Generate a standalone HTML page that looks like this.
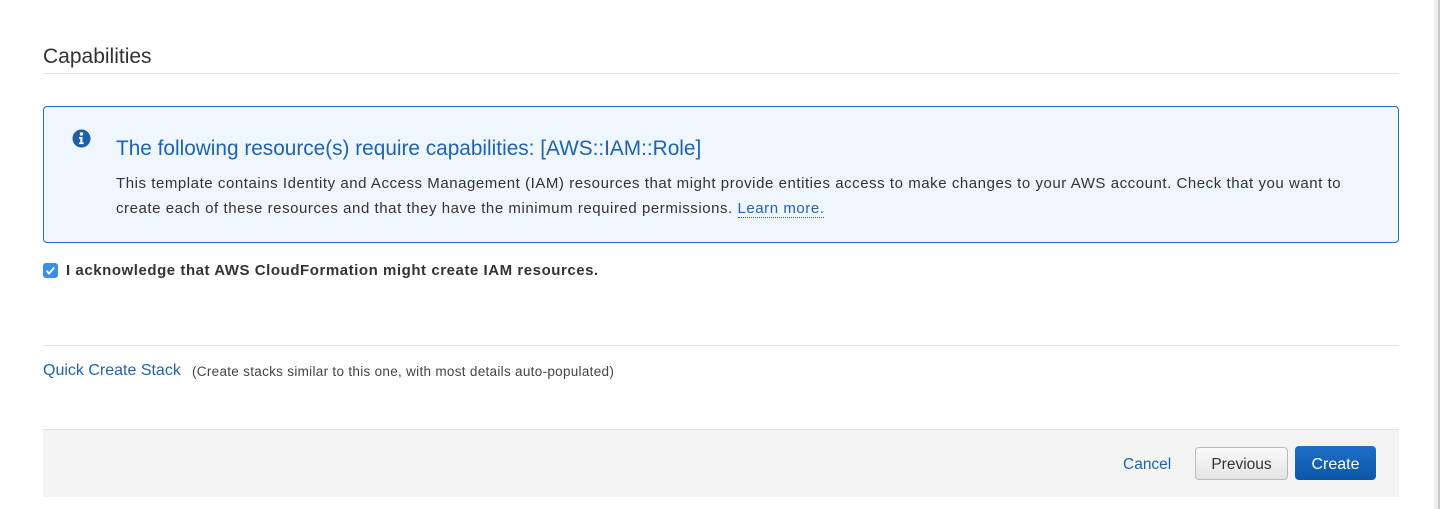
<!DOCTYPE html>
<html><head><style>
body{margin:0;width:1440px;height:509px;background:#fff;font-family:"Liberation Sans",sans-serif;position:relative;overflow:hidden;color:#333}
.a{position:absolute;white-space:nowrap}
</style></head><body>
<div class="a" style="left:1434px;top:0;width:4px;height:509px;background:#eee"></div>
<div class="a" style="left:1438px;top:0;width:2px;height:509px;background:#c8c8c8"></div>
<div class="a" style="left:43px;top:45px;font-size:21px;color:#333">Capabilities</div>
<div class="a" style="left:43px;top:73px;width:1356px;height:1px;background:#e2e2e2"></div>
<div class="a" style="left:43px;top:106px;width:1354px;height:135px;border:1px solid #1d6fc2;border-radius:4px;background:#eff6fd"></div>
<svg class="a" style="left:72px;top:129px" width="19" height="19" viewBox="0 0 19 19"><circle cx="9.5" cy="9.5" r="9" fill="#1f5fa8"/><circle cx="9.5" cy="5" r="1.7" fill="#fff"/><path d="M7 8h3.5v5.5h1.3v1.6H7v-1.6h1.3V9.6H7z" fill="#fff"/></svg>
<div class="a" style="left:116px;top:137px;font-size:20.8px;color:#1d63b5">The following resource(s) require capabilities: [AWS::IAM::Role]</div>
<div class="a" style="left:116px;top:172px;font-size:15px;letter-spacing:0.55px;line-height:24.5px;color:#333">This template contains Identity and Access Management (IAM) resources that might provide entities access to make changes to your AWS account. Check that you want to<br>create each of these resources and that they have the minimum required permissions. <span style="color:#1d63b5;border-bottom:1px dotted #1d63b5">Learn more.</span></div>
<div class="a" style="left:43px;top:263px;width:15px;height:15px;border-radius:3px;background:#3b8ee8"></div>
<svg class="a" style="left:43px;top:263px" width="15" height="15"><path d="M3.5 7.8l2.6 2.7 5.2-6" stroke="#fff" stroke-width="1.8" fill="none"/></svg>
<div class="a" style="left:66px;top:262px;font-size:15px;letter-spacing:0.55px;font-weight:bold;color:#333">I acknowledge that AWS CloudFormation might create IAM resources.</div>
<div class="a" style="left:43px;top:345px;width:1356px;height:1px;background:#e2e2e2"></div>
<div class="a" style="left:43px;top:362px;font-size:16px;color:#1d63b5">Quick Create Stack</div>
<div class="a" style="left:192px;top:364px;font-size:13.5px;letter-spacing:0.3px;color:#444">(Create stacks similar to this one, with most details auto-populated)</div>
<div class="a" style="left:43px;top:429px;width:1356px;height:67px;background:#f4f4f4;border-top:1px solid #e2e2e2"></div>
<div class="a" style="left:1123px;top:456px;font-size:15.5px;color:#1d63b5">Cancel</div>
<div class="a" style="left:1195px;top:447px;width:93px;height:33px;border:1px solid #bbb;border-radius:4px;background:linear-gradient(#fafafa,#e4e4e4);box-sizing:border-box;text-align:center;line-height:33px;font-size:15.5px;color:#333">Previous</div>
<div class="a" style="left:1295px;top:446px;width:81px;height:34px;border-radius:4px;background:linear-gradient(#1c6fc8,#0c56a8);text-align:center;line-height:37px;font-size:16px;color:#fff">Create</div>
</body></html>
